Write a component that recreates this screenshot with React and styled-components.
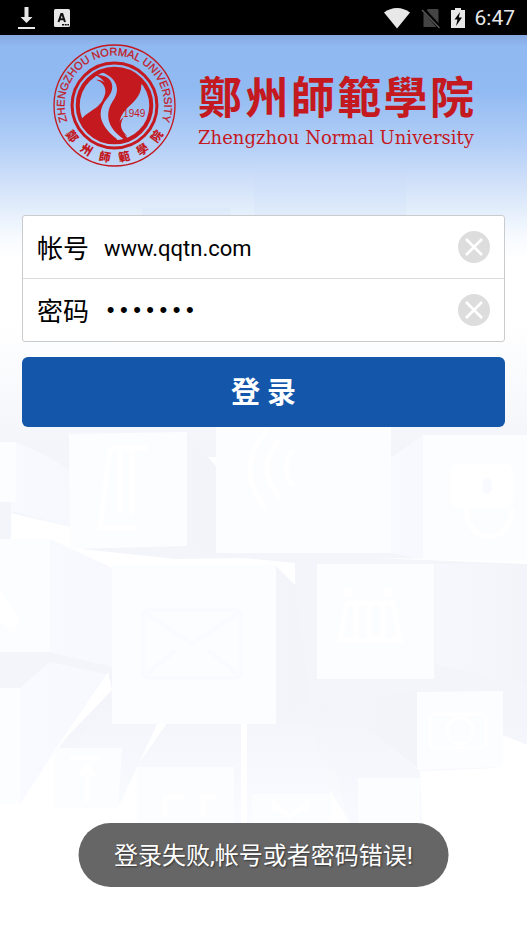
import React, { useState } from 'react';
import styled, { createGlobalStyle } from 'styled-components';

const GlobalStyle = createGlobalStyle`
  * {
    box-sizing: border-box;
  }

  body {
    margin: 0;
    background: #fff;
    color: #000;
    font-family: Roboto, 'Noto Sans CJK SC', sans-serif;
  }
`;

const Page = styled.div`
  position: relative;
  min-height: 100vh;
  display: flex;
  flex-direction: column;
  overflow: hidden;
  background: linear-gradient(
    180deg,
    #86a9e0 35px,
    #90b8f1 46px,
    #91baf2 90px,
    #b3cff7 145px,
    #cfdff9 180px,
    #e2edfb 208px,
    #f6faff 235px,
    #fff 260px
  );
`;

const Backdrop = styled.svg`
  position: absolute;
  inset: 0;
  width: 100%;
  height: 100%;
`;

const StatusBar = styled.div`
  position: relative;
  display: flex;
  align-items: center;
  justify-content: space-between;
  height: 35px;
  padding: 0 12px 0 18px;
  background: #000;
  color: #e8e8e8;
`;

const StatusGroup = styled.div`
  display: flex;
  align-items: center;
  gap: ${({ $gap }) => $gap}px;
`;

const Clock = styled.time`
  font-size: 21px;
  line-height: 24px;
`;

const Header = styled.header`
  position: relative;
  display: flex;
  align-items: flex-start;
  justify-content: center;
  gap: 22px;
  padding: 9px 0 48px;
  color: #c3191f;
`;

const Seal = styled.svg`
  width: 123px;
  height: 123px;
`;

const Wordmark = styled.h1`
  display: flex;
  flex-direction: column;
  margin: 0;
  padding-top: 20px;
  font-weight: 400;
`;

const ChineseName = styled.span`
  display: flex;
  justify-content: space-between;
  font-family: 'Noto Sans CJK TC', sans-serif;
  font-size: 44px;
  font-weight: 700;
  line-height: 62px;
`;

const EnglishName = styled.span`
  font-family: 'DejaVu Serif', serif;
  font-size: 18px;
  line-height: 24px;
  white-space: nowrap;
`;

const Form = styled.form`
  position: relative;
  display: flex;
  flex-direction: column;
  gap: 15px;
  padding: 0 22px;
`;

const Fields = styled.div`
  border: 1px solid #c9cbcd;
  border-radius: 3px;
  background: #fff;
`;

const Field = styled.div`
  box-sizing: content-box;
  display: flex;
  align-items: center;
  height: 62px;
  padding: 0 14px;

  & + & {
    border-top: 1px solid #dcdcdc;
  }
`;

const Label = styled.label`
  margin-right: 15px;
  padding-top: 4px;
  font-size: 26px;
  line-height: 36px;
`;

const Input = styled.input`
  flex: 1;
  min-width: 0;
  padding: 4px 0 0;
  border: 0;
  outline: 0;
  background: transparent;
  color: #000;
  font-family: Roboto, 'Noto Sans CJK SC', sans-serif;
  font-size: 22px;
  line-height: 32px;

  &[type='password'] {
    font-family: 'Liberation Mono', monospace;
  }
`;

const ClearButton = styled.button`
  display: flex;
  padding: 0;
  border: 0;
  background: none;
  cursor: pointer;
`;

const LoginButton = styled.button`
  height: 70px;
  padding: 0 0 4px;
  border: 0;
  border-radius: 6px;
  background: #1456aa;
  color: #fff;
  font-family: Roboto, 'Noto Sans CJK SC', sans-serif;
  font-size: 29px;
  font-weight: 700;
  cursor: pointer;
`;

const Toast = styled.div`
  position: absolute;
  left: 50%;
  bottom: 49px;
  transform: translateX(-50%);
  padding: 17px 36px 15px;
  border-radius: 32px;
  background: #666;
  color: #fff;
  font-size: 24px;
  font-weight: 400;
  line-height: 32px;
  text-shadow: 1px 1px 2px rgba(0, 0, 0, 0.5);
  white-space: nowrap;
`;

const DownloadIcon = () => (
  <svg width="17" height="24" viewBox="0 0 17 24" fill="#e8e8e8">
    <path d="M6.5 1h4v10h4l-6 6-6-6h4z" />
    <path d="M0 21h17v2H0z" />
  </svg>
);

const KeyboardIcon = () => (
  <svg width="16" height="18" viewBox="0 0 16 18">
    <rect width="16" height="18" rx="1.5" fill="#e8e8e8" />
    <path d="M4.5 13 7.3 5h1L11 13M5.6 10.3h4.4" fill="none" stroke="#111" strokeWidth="2" />
    <path d="M8 15h2v1.5H8zM10.7 15h2v1.5h-2zM13.3 15h1.7v1.5h-1.7z" fill="#111" />
  </svg>
);

const WifiIcon = () => (
  <svg width="28" height="22" viewBox="0 0 28 22" fill="#e8e8e8">
    <path d="M14 21.5 1 5.5Q7 1 14 1t13 4.5z" />
  </svg>
);

const NoSimIcon = () => (
  <svg width="20" height="22" viewBox="0 0 20 22">
    <path d="M7 2h9.5q1 0 1 1v17h-15V6.500z" fill="#444" />
    <path d="M2 2 19 21" stroke="#000" strokeWidth="4" />
    <path d="M1 3 18.500 21" stroke="#555" strokeWidth="1.600" />
  </svg>
);

const BatteryIcon = () => (
  <svg width="14" height="22" viewBox="0 0 14 22">
    <path d="M4 1h6v2h4v18H0V3h4z" fill="#e8e8e8" />
    <path d="M9 5 3.500 12.500h3L5 19l6-8.500H7.800z" fill="#000" />
  </svg>
);

const ClearIcon = () => (
  <svg width="32" height="32" viewBox="0 0 32 32">
    <circle cx="16" cy="16" r="16" fill="#ddd" />
    <path d="M8 8l16 16M24 8 8 24" stroke="#fff" strokeWidth="2.600" />
  </svg>
);

const NAME = ['鄭', '州', '師', '範', '學', '院'];

const UniversitySeal = () => (
  <Seal viewBox="26 19 368 368" role="img" aria-label="Zhengzhou Normal University seal">
    <defs>
      <path id="seal-top" d="M67.500 246A149 149 0 1 1 352.500 246" />
      <path id="seal-bottom" d="M41 203A169 169 0 0 0 379 203" />
      <clipPath id="seal-disc">
        <circle cx="210" cy="203" r="109" />
      </clipPath>
    </defs>
    <g fill="none" stroke="#c3191f">
      <circle cx="210" cy="203" r="181" strokeWidth="4" />
      <circle cx="210" cy="203" r="127" strokeWidth="9" />
      <circle cx="210" cy="203" r="110" strokeWidth="12" />
    </g>
    <g fill="#c3191f" clipPath="url(#seal-disc)">
      <path d="M100 262C118 222 158 218 174 188C190 158 190 127 152 112C203 108 216 148 191 178C157 216 158 257 218 304L205 325L100 320z" />
      <path d="M150 94L200 80L310 110L290 142C291 175 264 194 246 213C217 244 218 274 250 300L238 304C192 273 178 233 204 191C228 159 222 121 168 101z" />
      <path d="M154 126C184 125 192 145 184 166C183 145 175 133 154 126z" />
      <path d="M237 238C211 258 217 285 248 294C228 276 224 260 237 238z" />
    </g>
    <g fill="#c3191f" fontFamily="'Liberation Sans', sans-serif">
      <text fontSize="33" textAnchor="middle" stroke="#c3191f" strokeWidth="0.800">
        <textPath href="#seal-top" startOffset="50%">ZHENGZHOU NORMAL UNIVERSITY</textPath>
      </text>
      <text x="269" y="236" fontSize="30" textAnchor="middle">1949</text>
      <text
        fontSize="35"
        fontWeight="900"
        fontFamily="'Noto Sans CJK TC', sans-serif"
        textAnchor="middle"
      >
        {NAME.map((char, i) => (
          <textPath key={char} href="#seal-bottom" startOffset={`${20 + i * 12}%`}>
            {char}
          </textPath>
        ))}
      </text>
    </g>
  </Seal>
);

const Cubes = () => (
  <Backdrop viewBox="0 0 527 936" preserveAspectRatio="xMidYMin slice" aria-hidden="true">
    <defs>
      <linearGradient id="base" x1="0" y1="0" x2="0" y2="1">
        <stop offset="0" stopColor="#f3f5fa" stopOpacity="0" />
        <stop offset="0.250" stopColor="#f3f5fa" />
        <stop offset="0.800" stopColor="#f3f5fb" />
        <stop offset="1" stopColor="#fbfcff" />
      </linearGradient>
      <linearGradient id="side" x1="0" y1="0" x2="1" y2="0">
        <stop offset="0" stopColor="#f9faff" />
        <stop offset="1" stopColor="#f2f4fa" />
      </linearGradient>
      <linearGradient id="floor" x1="0" y1="0" x2="0" y2="1">
        <stop offset="0" stopColor="#f2f4f9" />
        <stop offset="1" stopColor="#f8faff" />
      </linearGradient>
    </defs>

    <path d="M142 208h88v20h-88zM254 157h152v58H254z" fill="#c8dcf8" opacity="0.200" />
    <path d="M0 320H527V760L420 785V825H45L20 804H0z" fill="url(#base)" />

    {/* cube sides */}
    <g fill="url(#side)">
      <path d="M16 442 45 455 70 470V527L11 511V442zM187 432 216 467V553L187 546z" />
      <path d="M50 539 112 568V667L50 652zM276 567 295 585 310 700 276 720z" />
      <path d="M391 458 423 435V560L391 553zM435 564h92v120l-92-20z" />
      <path d="M20 688 50 662 106 674 20 804zM350 690 417 692V770L357 722z" />
    </g>
    <g fill="url(#floor)">
      <path d="M110 692v32h48l-38 58H54zM168 722h73v46H137zM247 724h63l20 70h-80z" />
      <path d="M316 700 422 774V824H350z" />
    </g>

    {/* gaps between the cubes */}
    <g fill="#fff">
      <path d="M11 513 70 527 82 549 175 559 243 558 295 563V585L276 566 112 568 50 539H11z" />
      <path d="M108 672 63 738 20 804 54 808V755L66 738 112 690z" />
      <path d="M158 722h10l-31 44v44h-20zM241 724v100h6V724z" />
      <path d="M357 722 420 770 422 824H527V745L503 735 503 768 420 771z" />
      <path d="M330 790 350 824H330zM0 804h140v40H0zM208 457l8 9v-9zM370 558l157 2v4z" />
    </g>

    {/* cube faces */}
    <g fill="#fcfdff">
      <path d="M69 434 187 432V546L70 549zM216 427H391V553H216zM423 435H527V561L423 560z" />
      <path d="M0 442h16v60H0zM0 539h50v113H0zM112 565H276V724H112z" />
      <path d="M317 564H434V679H317zM417 692l86-1v76l-86 3zM0 688h20v116H0z" />
      <path d="M54 748h68l-4 60H54zM137 767h97v57h-97zM252 794h79v30h-79zM358 778h62v46h-62z" />
      <path d="M25 325h90v100H25z" opacity="0.600" />
    </g>

    {/* pictograms on the faces */}
    <g fill="none" stroke="#fafbff" strokeWidth="4">
      <rect x="143" y="610" width="98" height="68" rx="6" />
      <path d="M147 614 192 644 237 614M147 674 176 650M237 674 208 650" />
    </g>
    <g fill="none" stroke="#fff" strokeWidth="5">
      <path d="M293 450q-14 18 0 36M280 440q-26 29 0 58M267 430q-34 40 0 80" />
      <path d="M110 448h38M110 448l-10 80h38M120 450v64M132 450v64" />
      <rect x="453" y="466" width="58" height="40" rx="6" fill="#fff" />
      <path d="M466 508c0 38 46 38 46 0" />
      <path d="M347 603l-7 37h60l-7-37zM356 603v36M369 603v36M383 603v36" />
      <circle cx="348" cy="592" r="3" />
      <circle cx="388" cy="592" r="3" />
      <rect x="430" y="714" width="56" height="34" rx="5" strokeWidth="3" />
      <circle cx="460" cy="731" r="13" strokeWidth="3" />
      <path d="M70 758h30M87 802v-32M80 776l7-10 7 10" />
      <path d="M165 815v-18h20M203 815v-18h14M274 812v-8l16 12 16-12v8" />
    </g>
    <ellipse cx="487" cy="486" rx="5" ry="8" fill="#f8faff" />
    <path d="M0 590 20 620 14 632 0 622z" fill="#fff" />
  </Backdrop>
);

const App = () => {
  const [account, setAccount] = useState('www.qqtn.com');
  const [password, setPassword] = useState('1234567');

  return (
    <Page>
      <GlobalStyle />
      <Cubes />
      <StatusBar>
        <StatusGroup $gap={19}>
          <DownloadIcon />
          <KeyboardIcon />
        </StatusGroup>
        <StatusGroup $gap={10}>
          <WifiIcon />
          <NoSimIcon />
          <BatteryIcon />
          <Clock>6:47</Clock>
        </StatusGroup>
      </StatusBar>
      <Header>
        <UniversitySeal />
        <Wordmark>
          <ChineseName lang="zh-Hant">
            {NAME.map((char) => (
              <span key={char}>{char}</span>
            ))}
          </ChineseName>
          <EnglishName>Zhengzhou Normal University</EnglishName>
        </Wordmark>
      </Header>
      <Form onSubmit={(e) => e.preventDefault()}>
        <Fields>
          <Field>
            <Label htmlFor="account">帐号</Label>
            <Input id="account" type="text" value={account} onChange={(e) => setAccount(e.target.value)} />
            <ClearButton type="button" aria-label="清除帐号" onClick={() => setAccount('')}>
              <ClearIcon />
            </ClearButton>
          </Field>
          <Field>
            <Label htmlFor="password">密码</Label>
            <Input
              id="password"
              type="password"
              value={password}
              onChange={(e) => setPassword(e.target.value)}
            />
            <ClearButton type="button" aria-label="清除密码" onClick={() => setPassword('')}>
              <ClearIcon />
            </ClearButton>
          </Field>
        </Fields>
        <LoginButton type="submit">登 录</LoginButton>
      </Form>
      <Toast role="status">登录失败,帐号或者密码错误!</Toast>
    </Page>
  );
};

export default App;
